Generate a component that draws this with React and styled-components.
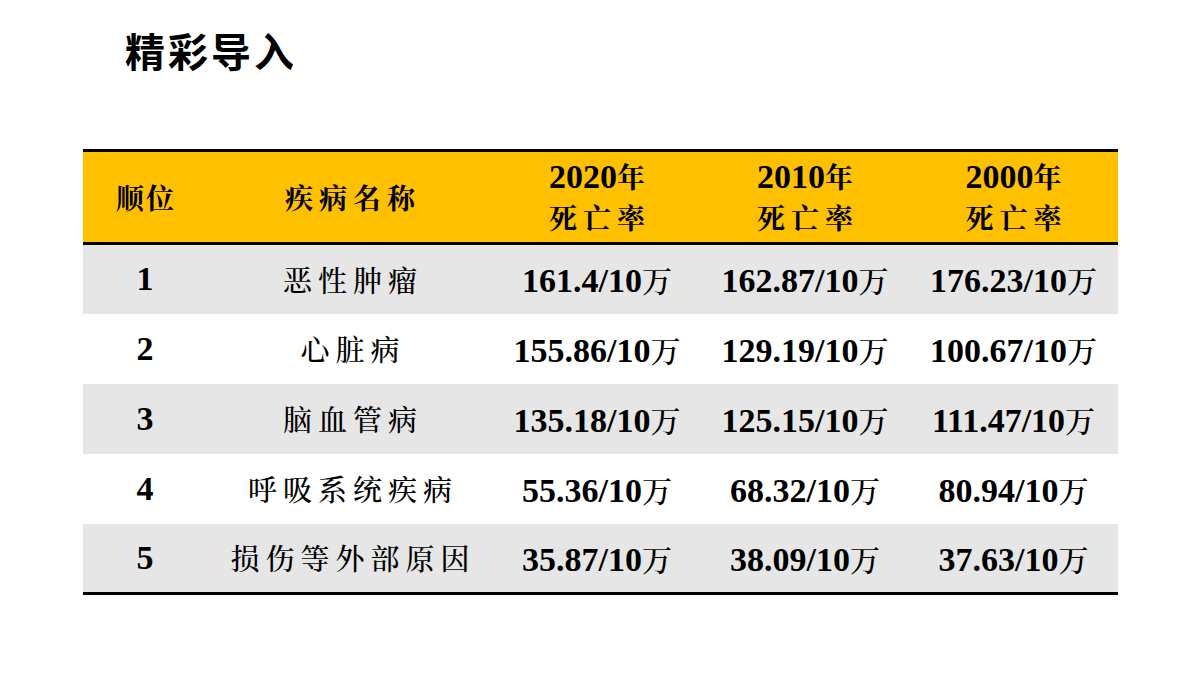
import React from "react";
import styled, { createGlobalStyle } from "styled-components";

const Global = createGlobalStyle`
  html, body { margin: 0; padding: 0; background: #fff; }
  body { width: 1200px; height: 675px; overflow: hidden; }
`;

const Page = styled.div`
  width: 1200px;
  height: 675px;
  box-sizing: border-box;
  padding: 22px 82px 0 83px;
  display: flex;
  flex-direction: column;
`;

const Title = styled.h1`
  margin: 0 0 0 42px;
  font-family: "Noto Sans CJK SC", "Noto Sans", sans-serif;
  font-weight: 700;
  font-size: 40px;
  line-height: 56px;
  letter-spacing: 3px;
  color: #000;
`;

const Table = styled.table`
  margin-top: 71px;
  width: 1035px;
  border-collapse: collapse;
  table-layout: fixed;
  border-top: 3px solid #000;
  border-bottom: 3px solid #000;
`;

const HeadRow = styled.tr`
  background: #ffc000;
  border-bottom: 3px solid #000;
  height: 93px;
`;

const Row = styled.tr`
  background: ${(p) => (p.$shade ? "#e6e6e6" : "#ffffff")};
  height: 70px;
`;

const Th = styled.th`
  padding: 0;
  text-align: center;
  vertical-align: middle;
  color: #000;
  font-family: "Liberation Serif", "Noto Serif CJK SC", "Noto Sans CJK SC", serif;
  font-weight: 700;
  font-size: 34px;
  line-height: 41px;
`;

const HeadCjk = styled.span`
  font-family: "Noto Serif CJK SC", "Noto Sans CJK SC", serif;
  font-weight: 700;
  font-size: 28px;
  letter-spacing: ${(p) => p.$ls || "0px"};
  margin-right: ${(p) => (p.$ls ? `-${p.$ls}` : "0")};
`;

const Td = styled.td`
  padding: 0;
  text-align: center;
  vertical-align: middle;
  color: #000;
  font-family: "Liberation Serif", "Noto Serif CJK SC", "Noto Sans CJK SC", serif;
  font-weight: 700;
  font-size: 34px;
`;

const Name = styled.span`
  font-family: "Noto Serif CJK SC", "Noto Sans CJK SC", serif;
  font-weight: 500;
  font-size: 29px;
  letter-spacing: 6px;
  margin-right: -6px;
`;

const Wan = styled.span`
  font-family: "Noto Serif CJK SC", "Noto Sans CJK SC", serif;
  font-weight: 500;
  font-size: 30px;
`;

const rows = [
  ["1", "恶性肿瘤", "161.4", "162.87", "176.23"],
  ["2", "心脏病", "155.86", "129.19", "100.67"],
  ["3", "脑血管病", "135.18", "125.15", "111.47"],
  ["4", "呼吸系统疾病", "55.36", "68.32", "80.94"],
  ["5", "损伤等外部原因", "35.87", "38.09", "37.63"],
];

const Rate = ({ v }) => (
  <>
    {v}/10<Wan>万</Wan>
  </>
);

const YearHead = ({ year }) => (
  <Th>
    {year}
    <HeadCjk>年</HeadCjk>
    <br />
    <HeadCjk $ls="6px">死亡率</HeadCjk>
  </Th>
);

export default function App() {
  return (
    <>
      <Global />
      <Page>
        <Title>精彩导入</Title>
        <Table>
          <colgroup>
            <col style={{ width: 124 }} />
            <col style={{ width: 286 }} />
            <col style={{ width: 208 }} />
            <col style={{ width: 208 }} />
            <col style={{ width: 209 }} />
          </colgroup>
          <thead>
            <HeadRow>
              <Th>
                <HeadCjk $ls="2px">顺位</HeadCjk>
              </Th>
              <Th>
                <HeadCjk $ls="6px">疾病名称</HeadCjk>
              </Th>
              <YearHead year="2020" />
              <YearHead year="2010" />
              <YearHead year="2000" />
            </HeadRow>
          </thead>
          <tbody>
            {rows.map((r, i) => (
              <Row key={r[0]} $shade={i % 2 === 0}>
                <Td>{r[0]}</Td>
                <Td>
                  <Name>{r[1]}</Name>
                </Td>
                <Td>
                  <Rate v={r[2]} />
                </Td>
                <Td>
                  <Rate v={r[3]} />
                </Td>
                <Td>
                  <Rate v={r[4]} />
                </Td>
              </Row>
            ))}
          </tbody>
        </Table>
      </Page>
    </>
  );
}
